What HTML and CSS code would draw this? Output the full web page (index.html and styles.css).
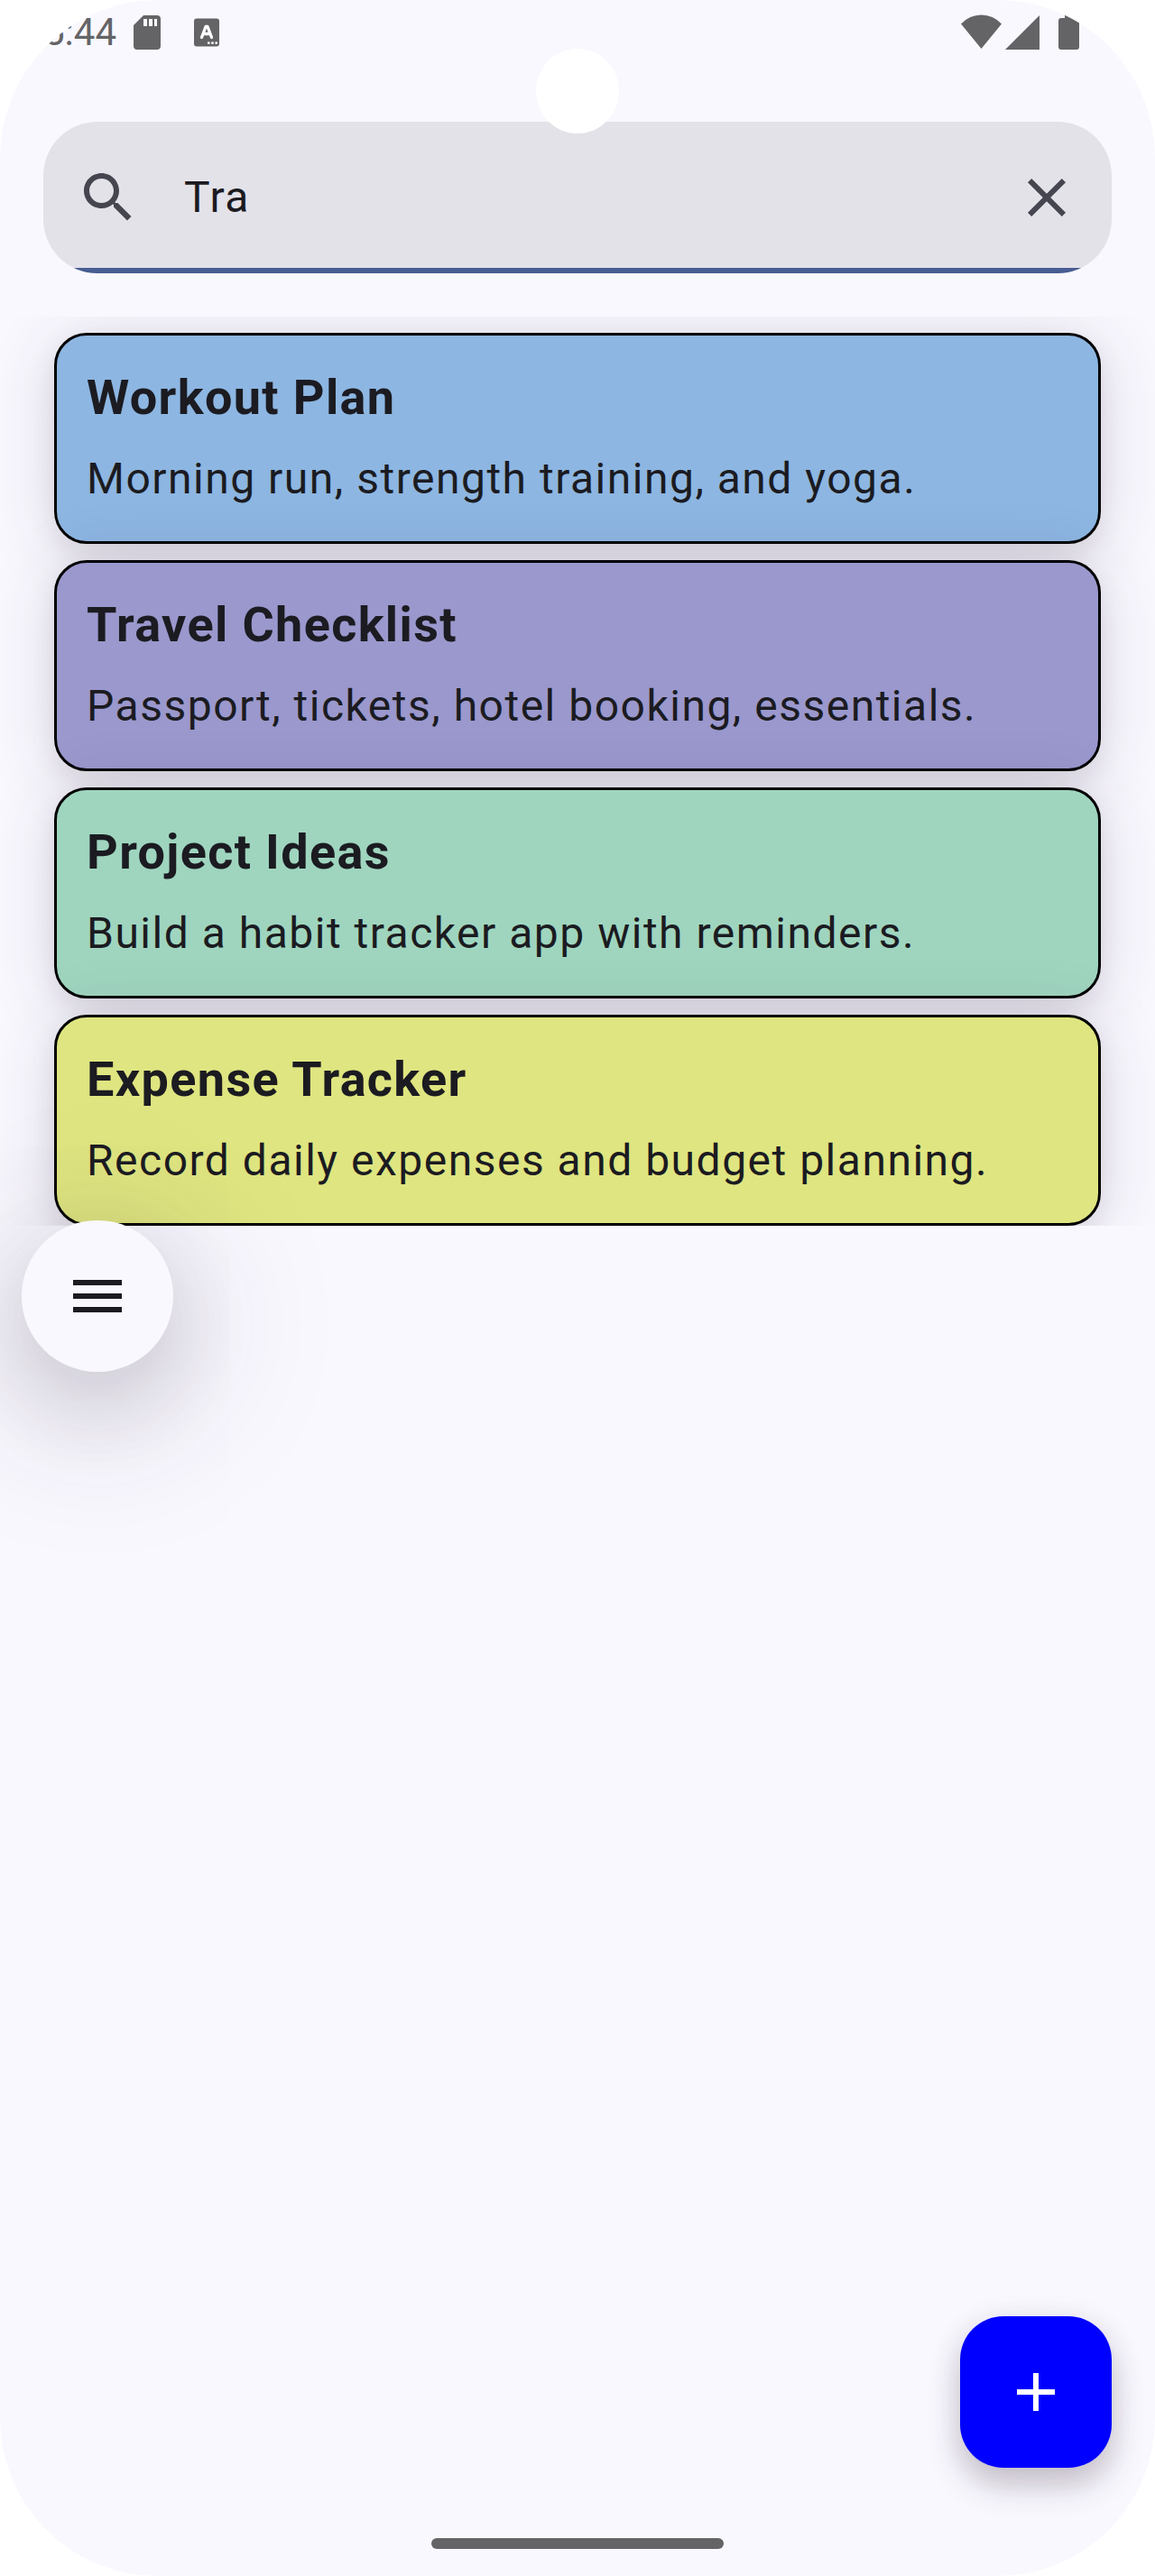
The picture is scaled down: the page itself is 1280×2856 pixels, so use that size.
FILE: index.html
```html
<!DOCTYPE html>
<html lang="en">
<head>
<meta charset="utf-8">
<title>Notes</title>
<link rel="stylesheet" href="styles.css">
</head>
<body>
<div class="screen">
  <header class="status-bar">
    <span class="time">5:44</span>
    <svg class="sd" width="30" height="38" viewBox="0 0 30 38"><path fill="#646466" fill-rule="evenodd" d="M11 0H26Q30 0 30 4V34Q30 38 26 38H4Q0 38 0 34V11ZM11 4V12H15V4ZM17 4V12H21V4ZM23 4V12H26V4Z"/></svg>
    <svg class="lang" width="28" height="32" viewBox="0 0 28 32"><rect y=".5" width="28" height="31" rx="3" fill="#646466"/><path d="M8.500 21.500L13 9.500H15L19.500 21.500M10.500 17.500H17.500" fill="none" stroke="#fff" stroke-width="3.300" stroke-linecap="round" stroke-linejoin="round"/><g fill="#fff"><circle cx="16.300" cy="27.700" r="1.400"/><circle cx="20.500" cy="27.700" r="1.400"/><circle cx="24.700" cy="27.700" r="1.400"/></g></svg>
    <span class="grow"></span>
    <svg class="wifi" width="45" height="38" viewBox="0 0 45 38"><path fill="#646466" d="M0 10.500Q9.500 .500 22.500 .500T45 10.500L22.500 38Z"/></svg>
    <svg class="signal" width="38" height="38" viewBox="0 0 38 38"><path fill="#646466" d="M38 0V38H0Z"/></svg>
    <svg class="battery" width="23" height="38" viewBox="0 0 23 38"><path fill="#646466" d="M7 0H16V3H20Q23 3 23 6V35Q23 38 20 38H3Q0 38 0 35V6Q0 3 3 3H7Z"/></svg>
  </header>

  <div class="search">
    <svg class="icon" viewBox="0 0 24 24"><path fill="#45464f" d="M15.500 14h-.790l-.280-.270C15.410 12.590 16 11.110 16 9.500 16 5.910 13.090 3 9.500 3S3 5.910 3 9.500 5.910 16 9.500 16c1.610 0 3.090-.590 4.230-1.570l.270.280v.790l5 4.990L20.490 19l-4.990-5zm-6 0C7.010 14 5 11.990 5 9.500S7.010 5 9.500 5 14 7.010 14 9.500 11.990 14 9.500 14z"/></svg>
    <span class="query">Tra</span>
    <svg class="icon" viewBox="0 0 24 24"><path fill="#45464f" d="M19 6.410L17.590 5 12 10.590 6.410 5 5 6.410 10.590 12 5 17.590 6.410 19 12 13.410 17.590 19 19 17.590 13.410 12z"/></svg>
  </div>

  <main class="notes">
    <article class="note blue"><h2>Workout Plan</h2><p>Morning run, strength training, and yoga.</p></article>
    <article class="note purple"><h2>Travel Checklist</h2><p>Passport, tickets, hotel booking, essentials.</p></article>
    <article class="note green"><h2>Project Ideas</h2><p>Build a habit tracker app with reminders.</p></article>
    <article class="note yellow"><h2>Expense Tracker</h2><p>Record daily expenses and budget planning.</p></article>
  </main>

  <button class="menu" aria-label="Menu"><svg class="icon" viewBox="0 0 24 24"><path fill="#1b1b21" d="M3 18h18v-2H3v2zm0-5h18v-2H3v2zm0-7v2h18V6H3z"/></svg></button>
  <button class="add" aria-label="Add note"><svg class="icon" viewBox="0 0 24 24"><path fill="#fff" d="M19 13h-6v6h-2v-6H5v-2h6V5h2v6h6v2z"/></svg></button>
  <div class="camera"></div>
  <div class="handle"></div>
</div>
</body>
</html>
```
FILE: styles.css
```css
* { box-sizing: border-box; }
body { margin: 0; background: #fff; font-family: Roboto, sans-serif; color: #1b1b21; }
.screen {
  position: relative;
  width: 1280px;
  height: 2856px;
  border-radius: 175px;
  overflow: hidden;
  background: #f9f8ff;
}
svg { display: block; flex: none; }
.icon { width: 72px; height: 72px; }

.status-bar { display: flex; height: 135px; padding: 17px 84px 0 48px; align-items: flex-start; }
.time { font-size: 42px; line-height: 49px; margin-top: -6px; width: 100px; color: #646466; }
.lang { margin: 3px 0 0 37px; }
.grow { flex: 1; }
.wifi { margin-top: -1px; }
.signal { margin-left: 4px; }
.battery { margin-left: 21px; }

.search {
  display: flex;
  align-items: center;
  height: 168px;
  margin: 0 48px;
  padding: 0 36px;
  border-radius: 60px;
  background: linear-gradient(#e3e2e9 162px, #485d92 162px);
}
.query { flex: 1; margin-left: 48px; font-size: 48px; line-height: 72px; letter-spacing: 1.5px; }

.notes {
  display: flex;
  flex-direction: column;
  gap: 18px;
  height: 1008px;
  margin-top: 48px;
  padding: 18px 60px 0;
  overflow: hidden;
}
.note {
  height: 234px;
  flex: none;
  padding: 33px;
  border: 3px solid #000;
  border-radius: 36px;
  box-shadow: 0 10px 28px rgba(50, 25, 45, .08), 0 8px 76px rgba(50, 40, 60, .16);
}
.note h2 { margin: 0; font-size: 54px; line-height: 72px; font-weight: 700; letter-spacing: 1.35px; }
.note p { margin: 18px 0 0; font-size: 48px; line-height: 72px; letter-spacing: 1.5px; white-space: nowrap; }
.blue { background: #8db6e2; }
.purple { background: #9a98cd; }
.green { background: #9fd5bf; }
.yellow { background: #dfe580; }

button { display: flex; align-items: center; justify-content: center; width: 168px; height: 168px; padding: 0; border: 0; }
.menu {
  position: absolute;
  left: 24px;
  top: 1353px;
  border-radius: 50%;
  background: #f9f8ff;
  box-shadow: 0 36px 90px 6px rgba(50, 25, 45, .12), 0 30px 170px 30px rgba(50, 40, 60, .15);
}
.add {
  position: absolute;
  right: 48px;
  bottom: 120px;
  border-radius: 48px;
  background: #00f;
  box-shadow: 0 20px 36px rgba(50, 30, 45, .24), 0 4px 36px rgba(50, 40, 60, .07);
}
.camera { position: absolute; left: 594px; top: 54px; width: 92px; height: 94px; border-radius: 50%; background: #fff; }
.handle { position: absolute; left: 478px; bottom: 30px; width: 324px; height: 12px; border-radius: 6px; background: #646466; }
```
